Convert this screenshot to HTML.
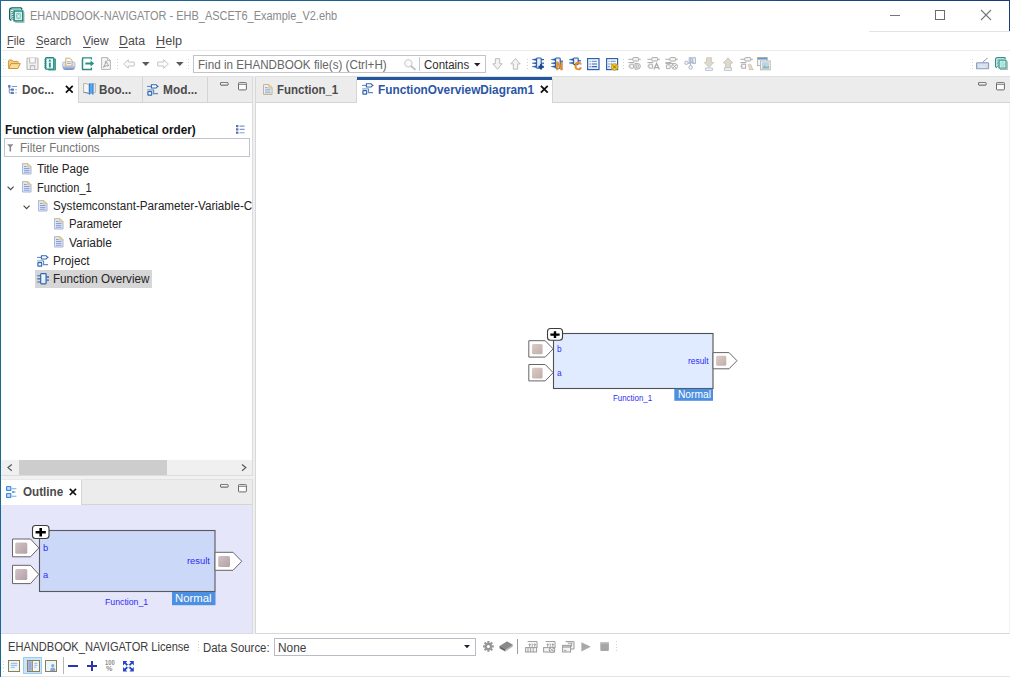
<!DOCTYPE html>
<html><head><meta charset="utf-8"><title>EHANDBOOK-NAVIGATOR</title>
<style>
html,body{margin:0;padding:0;}
body{width:1010px;height:677px;position:relative;overflow:hidden;background:#fff;font-family:"Liberation Sans",sans-serif;font-size:12px;color:#222;}
.a{position:absolute;}
.t{position:absolute;white-space:nowrap;transform-origin:0 0;}
.b{font-weight:bold;}
svg{position:absolute;overflow:visible;}
u{text-decoration:underline;text-underline-offset:1.5px;text-decoration-thickness:1px;}
</style></head><body>
<!-- window frame -->
<div class="a" style="left:0px;top:0px;width:1010px;height:1px;background:linear-gradient(90deg,#1b6a98,#1a5c93 45%,#1c3a7d);"></div>
<div class="a" style="left:0px;top:0px;width:1px;height:677px;background:#1a6a8f;"></div>
<div class="a" style="left:1009px;top:0px;width:1px;height:31px;background:#1c3a7d;"></div>
<div class="a" style="left:869px;top:31px;width:141px;height:1px;background:#e3e3e3;"></div>
<div class="a" style="left:1px;top:676px;width:1009px;height:1px;background:#e4e4e4;"></div>
<!-- title bar -->
<svg style="left:9px;top:6.5px;" width="17" height="17" viewBox="0 0 17 17">
<path d="M6.2 15.4 H15 V5.2" fill="none" stroke="#b9b9b9" stroke-width="1.1"/>
<path d="M12.7 2.8 V1.8 Q12.7 0.9 11.8 0.9 H3.2 Q0.7 0.9 0.7 3.4 V11.4 Q0.7 13 2.4 13.2" fill="none" stroke="#0e625c" stroke-width="1.4"/>
<path d="M2 2.6 H11.6" stroke="#7cc4ba" stroke-width="1"/>
<rect x="5.1" y="4" width="8.7" height="9.9" fill="#d9f0ed" stroke="#138278" stroke-width="1.4"/>
<rect x="7" y="5.9" width="5" height="6.1" fill="#7fc8be"/>
<path d="M7.4 11.6 L11.8 6.4 M7.6 6.6 L9.4 8.8 M10.4 9.8 L11.8 11.6" stroke="#e6f6f3" stroke-width="0.9"/>
<circle cx="9.7" cy="9.2" r="1" fill="#e6f6f3"/>
<path d="M2.2 4.4 L4.8 5.2 M2.2 6.2 L4.8 7 M2.2 8 L4.8 8.8 M2.2 9.8 L4.8 10.6 M2.2 11.6 L4.8 12.4" stroke="#16796f" stroke-width="0.9"/></svg>
<div class="t" style="left:30.4px;top:9.13px;font-size:12px;line-height:14px;height:14px;transform:scaleX(0.9139);color:#8a8a8a;">EHANDBOOK-NAVIGATOR - EHB_ASCET6_Example_V2.ehb</div>
<div class="a" style="left:890px;top:15px;width:10px;height:1px;background:#777;"></div>
<div class="a" style="left:935px;top:10px;width:10px;height:10px;background:transparent;border:1px solid #6b6b6b;box-sizing:border-box;"></div>
<svg style="left:981px;top:10px;" width="10" height="10" viewBox="0 0 10 10"><path d="M0 0 L10 10 M10 0 L0 10" stroke="#777" stroke-width="1.1" fill="none"/></svg>
<!-- menu -->
<div class="t" style="left:7.0px;top:34.03px;font-size:12px;line-height:14px;height:14px;transform:scaleX(0.9309);color:#4c4c4c;"><u>F</u>ile</div>
<div class="t" style="left:36.0px;top:34.03px;font-size:12px;line-height:14px;height:14px;transform:scaleX(0.9284);color:#4c4c4c;"><u>S</u>earch</div>
<div class="t" style="left:82.5px;top:34.03px;font-size:12px;line-height:14px;height:14px;transform:scaleX(0.9886);color:#4c4c4c;"><u>V</u>iew</div>
<div class="t" style="left:119.0px;top:34.03px;font-size:12px;line-height:14px;height:14px;transform:scaleX(1.0257);color:#4c4c4c;"><u>D</u>ata</div>
<div class="t" style="left:156.0px;top:34.03px;font-size:12px;line-height:14px;height:14px;transform:scaleX(1.0535);color:#4c4c4c;"><u>H</u>elp</div>
<div class="a" style="left:2px;top:50px;width:1008px;height:1px;background:#ebebeb;"></div>
<!-- toolbar -->
<div class="a" style="left:3px;top:59px;width:1px;height:1px;background:#d2d2d2;"></div>
<div class="a" style="left:3px;top:62px;width:1px;height:1px;background:#d2d2d2;"></div>
<div class="a" style="left:3px;top:65px;width:1px;height:1px;background:#d2d2d2;"></div>
<div class="a" style="left:3px;top:68px;width:1px;height:1px;background:#d2d2d2;"></div>
<svg style="left:8px;top:59px;" width="13" height="11" viewBox="0 0 13 11">
<path d="M0.6 9.4 V2 Q0.6 1 1.6 1 H4 L5.2 2.4 H9.4 Q10.2 2.4 10.2 3.2 V4.5" fill="#f3cf84" stroke="#d09a40" stroke-width="1"/>
<path d="M0.7 9.5 L2.9 4.6 H12.3 L9.9 9.5 Z" fill="#f8dc97" stroke="#cf9436" stroke-width="1" stroke-linejoin="round"/></svg>
<svg style="left:26px;top:57px;" width="13" height="13" viewBox="0 0 13 13">
<rect x="1" y="1" width="11" height="11.5" rx="1" fill="#f1f1f1" stroke="#bdbdbd" stroke-width="1.2"/>
<path d="M3.6 1.2 V5.4 Q3.6 6 4.2 6 H8.8 Q9.4 6 9.4 5.4 V1.2" fill="#fafafa" stroke="#bdbdbd" stroke-width="1.1"/>
<path d="M4.4 12.4 V8.6 H8.6 V12.4" fill="none" stroke="#bdbdbd" stroke-width="1.1"/>
</svg>
<svg style="left:44px;top:57px;" width="13" height="14" viewBox="0 0 13 14">
<path d="M3 2 H11.4 V13 H4.4 V12" fill="#8fcdc5" stroke="#2c968c" stroke-width="1"/>
<rect x="1.6" y="0.7" width="8.2" height="11.4" rx="0.8" fill="#f2faf9" stroke="#1d8a80" stroke-width="1.4"/>
<path d="M0.2 2.8 h2.2 M0.2 4.8 h2.2 M0.2 6.8 h2.2 M0.2 8.8 h2.2 M0.2 10.6 h2.2" stroke="#1d8a80" stroke-width="0.9"/>
<path d="M5.8 2 L7.2 4.4 H4.4 Z" fill="#1d8a80"/>
<rect x="4.9" y="5.6" width="1.9" height="4.9" fill="#2c968c"/></svg>
<svg style="left:62px;top:57px;" width="14" height="14" viewBox="0 0 14 14">
<defs><linearGradient id="tr" x1="0" y1="0" x2="0" y2="1"><stop offset="0" stop-color="#c9d5ee"/><stop offset="1" stop-color="#6f8ac8"/></linearGradient></defs>
<path d="M0.6 6.4 Q0.6 5 2 5 H11.6 Q13 5 13 6.4 V10 H0.6 Z" fill="#dbe3f4" stroke="#9fb2dc" stroke-width="0.8"/>
<path d="M3.8 9 V1.2 H7.8 L10 3.2 V9 Z" fill="#fbfaf3" stroke="#c9a64e" stroke-width="0.9"/>
<path d="M5 4.8 H8.8 M5 6.6 H8.8" stroke="#8aa0d0" stroke-width="0.9"/>
<path d="M0.6 8.4 H2.4 Q2.6 9.6 3.8 9.6 H9.8 Q11 9.6 11.2 8.4 H13 V10 Q13 13 10 13 H3.6 Q0.6 13 0.6 10 Z" fill="url(#tr)"/></svg>
<svg style="left:81px;top:57px;" width="14" height="14" viewBox="0 0 14 14">
<path d="M10.4 2.6 V0.9 H1.6 V12.5 H10.4 V10.6" fill="none" stroke="#2c8f86" stroke-width="1.3"/>
<path d="M0.4 3 h1.6 M0.4 5 h1.6 M0.4 7 h1.6 M0.4 9 h1.6 M0.4 11 h1.6" stroke="#2c8f86" stroke-width="0.8"/>
<path d="M4.4 5.4 H9.6 V3.4 L13.2 6.5 L9.6 9.6 V7.6 H4.4 Z" fill="#2c8f86"/></svg>
<svg style="left:101px;top:57px;" width="10" height="13" viewBox="0 0 10 13">
<path d="M0.6 0.6 H6.4 L9.4 3.6 V12.4 H0.6 Z" fill="#f6f6f6" stroke="#b5b5b5" stroke-width="1"/>
<path d="M6.4 0.6 V3.6 H9.4" fill="none" stroke="#b5b5b5" stroke-width="0.9"/>
<path d="M2.4 10.2 Q4.6 7.6 4.6 4.6 Q4.6 3.2 5.2 4.4 Q6 7.4 8 8.6 Q5 8.2 2.4 10.2 Z" fill="none" stroke="#9a9a9a" stroke-width="0.9"/>
</svg>
<div class="a" style="left:117px;top:59px;width:1px;height:1px;background:#d2d2d2;"></div>
<div class="a" style="left:117px;top:62px;width:1px;height:1px;background:#d2d2d2;"></div>
<div class="a" style="left:117px;top:65px;width:1px;height:1px;background:#d2d2d2;"></div>
<div class="a" style="left:117px;top:68px;width:1px;height:1px;background:#d2d2d2;"></div>
<svg style="left:123px;top:59px;" width="12" height="10" viewBox="0 0 12 10"><path d="M0.7 5 L5.3 0.7 V3 H11.3 V7 H5.3 V9.3 Z" fill="#fbfbfb" stroke="#c6c6c6" stroke-width="1" stroke-linejoin="round"/></svg>
<svg style="left:142px;top:62px;" width="8" height="4" viewBox="0 0 8 4"><path d="M0 0 H7.6 L3.8 4 Z" fill="#5a5a5a"/></svg>
<svg style="left:157px;top:59px;" width="12" height="10" viewBox="0 0 12 10"><path d="M11.3 5 L6.7 0.7 V3 H0.7 V7 H6.7 V9.3 Z" fill="#fbfbfb" stroke="#c6c6c6" stroke-width="1" stroke-linejoin="round"/></svg>
<svg style="left:175.5px;top:62px;" width="8" height="4" viewBox="0 0 8 4"><path d="M0 0 H7.6 L3.8 4 Z" fill="#5a5a5a"/></svg>
<div class="a" style="left:188px;top:59px;width:1px;height:1px;background:#d2d2d2;"></div>
<div class="a" style="left:188px;top:62px;width:1px;height:1px;background:#d2d2d2;"></div>
<div class="a" style="left:188px;top:65px;width:1px;height:1px;background:#d2d2d2;"></div>
<div class="a" style="left:188px;top:68px;width:1px;height:1px;background:#d2d2d2;"></div>
<div class="a" style="left:193px;top:55px;width:293px;height:18px;background:#fff;border:1px solid #c0c3ca;box-sizing:border-box;"></div>
<div class="t" style="left:198.3px;top:58.03px;font-size:12px;line-height:14px;height:14px;transform:scaleX(0.9708);color:#666;">Find in EHANDBOOK file(s) (Ctrl+H)</div>
<svg style="left:404px;top:59px;" width="12" height="11" viewBox="0 0 12 11"><circle cx="4.4" cy="4.4" r="3.6" fill="#fafafa" stroke="#c9c9c9" stroke-width="1.1"/><path d="M7.2 7.2 L11 10.4" stroke="#bdbdbd" stroke-width="1.8" stroke-linecap="round"/></svg>
<div class="a" style="left:419px;top:57px;width:1px;height:14px;background:#c8c8c8;"></div>
<div class="t" style="left:424.2px;top:58.03px;font-size:12px;line-height:14px;height:14px;transform:scaleX(0.9543);color:#2e2e2e;">Contains</div>
<svg style="left:473.6px;top:63px;" width="7" height="4" viewBox="0 0 7 4"><path d="M0 0 H6.4 L3.2 3.4 Z" fill="#222"/></svg>
<svg style="left:492px;top:58px;" width="11" height="12" viewBox="0 0 11 12"><path d="M3.3 0.7 H7.7 V5.8 H10.2 L5.5 11.2 L0.8 5.8 H3.3 Z" fill="#f3f3f3" stroke="#bcbcbc" stroke-width="1" stroke-linejoin="round"/></svg>
<svg style="left:510px;top:58px;" width="11" height="12" viewBox="0 0 11 12"><path d="M3.3 11.2 H7.7 V5.9 H10.2 L5.5 0.6 L0.8 5.9 H3.3 Z" fill="#f3f3f3" stroke="#bcbcbc" stroke-width="1" stroke-linejoin="round"/></svg>
<div class="a" style="left:526.5px;top:59px;width:1px;height:1px;background:#d2d2d2;"></div>
<div class="a" style="left:526.5px;top:62px;width:1px;height:1px;background:#d2d2d2;"></div>
<div class="a" style="left:526.5px;top:65px;width:1px;height:1px;background:#d2d2d2;"></div>
<div class="a" style="left:526.5px;top:68px;width:1px;height:1px;background:#d2d2d2;"></div>
<svg style="left:532px;top:57.3px;" width="14" height="14" viewBox="0 0 14 14"><rect x="4.6" y="1" width="4.6" height="10.2" rx="0.8" fill="#eaf0fa" stroke="#2a5ba8" stroke-width="1.1"/><path d="M0.2 2.6 L4 1.8 V3.4000000000000004 Z" fill="#2a5ba8" stroke="#2a5ba8" stroke-width="0.5"/><path d="M0.2 6.2 L4 5.4 V7.0 Z" fill="#2a5ba8" stroke="#2a5ba8" stroke-width="0.5"/><path d="M0.2 9.6 L4 8.799999999999999 V10.4 Z" fill="#2a5ba8" stroke="#2a5ba8" stroke-width="0.5"/><path d="M9 2.6 h3" stroke="#2a5ba8" stroke-width="1.2"/><path d="M9 6.2 h3" stroke="#2a5ba8" stroke-width="1.2"/><path d="M6.4 9.8 h5.4 M9.1 7.1 v5.4" stroke="#1a4a9a" stroke-width="2.2"/><rect x="7.6" y="8.3" width="3" height="3" fill="#1a4a9a" transform="rotate(45 9.1 9.8)"/></svg>
<svg style="left:550.6px;top:57.3px;" width="14" height="14" viewBox="0 0 14 14"><rect x="4.6" y="1" width="4.6" height="10.2" rx="0.8" fill="#eaf0fa" stroke="#2a5ba8" stroke-width="1.1"/><path d="M0.2 2.6 L4 1.8 V3.4000000000000004 Z" fill="#2a5ba8" stroke="#2a5ba8" stroke-width="0.5"/><path d="M0.2 6.2 L4 5.4 V7.0 Z" fill="#2a5ba8" stroke="#2a5ba8" stroke-width="0.5"/><path d="M0.2 9.6 L4 8.799999999999999 V10.4 Z" fill="#2a5ba8" stroke="#2a5ba8" stroke-width="0.5"/><path d="M9 4.2 h3" stroke="#2a5ba8" stroke-width="1.2"/><text x="5" y="13" font-family="Liberation Sans, sans-serif" font-weight="bold" font-size="10" fill="#e8942c" stroke="#d9831f" stroke-width="0.5">N</text></svg>
<svg style="left:569px;top:57.3px;" width="14" height="14" viewBox="0 0 14 14"><rect x="4.6" y="1" width="4.6" height="6.6" rx="0.8" fill="#eaf0fa" stroke="#2a5ba8" stroke-width="1.1"/><path d="M0.2 2.6 L4 1.8 V3.4000000000000004 Z" fill="#2a5ba8" stroke="#2a5ba8" stroke-width="0.5"/><path d="M0.2 6 L4 5.2 V6.8 Z" fill="#2a5ba8" stroke="#2a5ba8" stroke-width="0.5"/><path d="M9 3.8 h3" stroke="#2a5ba8" stroke-width="1.2"/><text x="5.6" y="13" font-family="Liberation Sans, sans-serif" font-weight="bold" font-size="10" fill="#e8942c" stroke="#d9831f" stroke-width="0.5">C</text></svg>
<svg style="left:587.4px;top:58px;" width="13" height="12" viewBox="0 0 13 12">
<defs><linearGradient id="lg1" x1="0" y1="0" x2="0" y2="1"><stop offset="0" stop-color="#fff"/><stop offset="1" stop-color="#dde8f8"/></linearGradient></defs>
<rect x="0.6" y="0.6" width="11.4" height="11" fill="url(#lg1)" stroke="#2f63b0" stroke-width="1.2"/>
<path d="M2.6 3.3 h1.1 M4.8 3.3 h5.2" stroke="#7f9fd4" stroke-width="1.3"/>
<path d="M2.6 6 h1.1 M4.8 6 h5.2 M2.6 8.6 h1.1 M4.8 8.6 h5.2" stroke="#3a6cb8" stroke-width="1.1"/></svg>
<svg style="left:606px;top:58px;" width="14" height="13" viewBox="0 0 14 13">
<rect x="0.6" y="0.6" width="11" height="11" fill="url(#lg1)" stroke="#2f63b0" stroke-width="1.2"/>
<path d="M2.4 3.3 h1.1 M4.6 3.3 h5" stroke="#7f9fd4" stroke-width="1.3"/>
<path d="M2.4 6 h1.1 M4.6 6 h1.6 M2.4 8.6 h1.1" stroke="#3a6cb8" stroke-width="1.1"/>
<circle cx="8.5" cy="8.9" r="3.3" fill="#f0c62c" stroke="#c29a1c" stroke-width="0.8"/>
<path d="M7 7.4 l3 3 M10 7.4 l-3 3" stroke="#8a6a10" stroke-width="0.9"/></svg>
<div class="a" style="left:623px;top:59px;width:1px;height:1px;background:#d2d2d2;"></div>
<div class="a" style="left:623px;top:62px;width:1px;height:1px;background:#d2d2d2;"></div>
<div class="a" style="left:623px;top:65px;width:1px;height:1px;background:#d2d2d2;"></div>
<div class="a" style="left:623px;top:68px;width:1px;height:1px;background:#d2d2d2;"></div>
<svg style="left:628px;top:57px;" width="14" height="14" viewBox="0 0 14 14"><path d="M0.4 2.3 h4.4 M10.6 2.3 h2.2" stroke="#acacac" stroke-width="1"/><rect x="4.8" y="0.6" width="5.8" height="3.4" rx="0.6" fill="#f6f6f6" stroke="#acacac" stroke-width="1"/><path d="M0.4 5.6 h6" stroke="#acacac" stroke-width="1"/><path d="M0.4 9.2 h1.4" stroke="#acacac" stroke-width="1"/><rect x="1.8" y="7.2" width="3.8" height="4" rx="0.6" fill="#f6f6f6" stroke="#acacac" stroke-width="1"/><path d="M7 6.4 h2.2 q3.2 0 3.2 2.9 q0 2.9 -3.2 2.9 h-2.2 z" fill="#f6f6f6" stroke="#acacac" stroke-width="1"/><path d="M8.6 7.6 v3.4 q2.2 0 2.2 -1.7 q0 -1.7 -2.2 -1.7z" fill="none" stroke="#acacac" stroke-width="0.8"/></svg>
<svg style="left:646.6px;top:57px;" width="14" height="14" viewBox="0 0 14 14"><path d="M0.4 2.3 h4.4 M10.6 2.3 h2.2" stroke="#acacac" stroke-width="1"/><rect x="4.8" y="0.6" width="5.8" height="3.4" rx="0.6" fill="#f6f6f6" stroke="#acacac" stroke-width="1"/><path d="M0.4 5.6 h6" stroke="#acacac" stroke-width="1"/><path d="M0.4 9.2 h1.4" stroke="#acacac" stroke-width="1"/><rect x="1.8" y="7.2" width="3.8" height="4" rx="0.6" fill="#f6f6f6" stroke="#acacac" stroke-width="1"/><path d="M6.8 12.4 L9.6 6.4 L12.4 12.4 M7.8 10.6 h3.6" fill="none" stroke="#acacac" stroke-width="1.3"/></svg>
<svg style="left:665px;top:57px;" width="14" height="14" viewBox="0 0 14 14"><path d="M0.4 2.3 h4.4 M10.6 2.3 h2.2" stroke="#acacac" stroke-width="1"/><rect x="4.8" y="0.6" width="5.8" height="3.4" rx="0.6" fill="#f6f6f6" stroke="#acacac" stroke-width="1"/><path d="M0.4 5.6 h6" stroke="#acacac" stroke-width="1"/><path d="M0.4 6.6 h9" stroke="#acacac" stroke-width="1"/><rect x="1.4" y="7.8" width="3.8" height="3.8" rx="0.6" fill="#f6f6f6" stroke="#acacac" stroke-width="1"/><circle cx="9.6" cy="9.4" r="2.9" fill="#f6f6f6" stroke="#acacac" stroke-width="1"/><path d="M7.8 7.6 l3.6 3.6 M11.4 7.6 l-3.6 3.6" stroke="#acacac" stroke-width="0.9"/></svg>
<svg style="left:684px;top:57px;" width="14" height="14" viewBox="0 0 14 14"><rect x="5.2" y="0.8" width="2.8" height="4.8" fill="#f4f6fa" stroke="#aab6ca" stroke-width="1"/><rect x="8.8" y="0.8" width="2.6" height="5.6" fill="#f4f6fa" stroke="#aab6ca" stroke-width="1"/><path d="M6.6 0.8 L6.6 9 M10 5 L3.4 6.6" stroke="#aab6ca" stroke-width="1"/><circle cx="2.4" cy="5.8" r="1.7" fill="#f4f6fa" stroke="#aab6ca" stroke-width="1"/><circle cx="6.6" cy="10.4" r="1.8" fill="#f4f6fa" stroke="#aab6ca" stroke-width="1"/></svg>
<svg style="left:703px;top:57px;" width="12" height="14" viewBox="0 0 12 14"><path d="M2.4 11 h7 v2.4 h-7 z" fill="#f7f9fc" stroke="#b7c3d6" stroke-width="1"/><path d="M3.6 0.8 H8.4 V5.4 H10.8 L6 10.4 L1.2 5.4 H3.6 Z" fill="#ddd9cc" stroke="#c9c5b6" stroke-width="0.9" stroke-linejoin="round"/></svg>
<svg style="left:722px;top:57px;" width="12" height="14" viewBox="0 0 12 14"><path d="M2.4 10.6 h7 v2.8 h-7 z" fill="#f7f9fc" stroke="#b7c3d6" stroke-width="1"/><path d="M3.6 10.8 H8.4 V6 H10.8 L6 0.8 L1.2 6 H3.6 Z" fill="#ddd9cc" stroke="#c9c5b6" stroke-width="0.9" stroke-linejoin="round"/></svg>
<svg style="left:740px;top:57px;" width="14" height="14" viewBox="0 0 14 14"><path d="M0.4 2.3 h4.4 M10.6 2.3 h2.2" stroke="#acacac" stroke-width="1"/><rect x="4.8" y="0.6" width="5.8" height="3.4" rx="0.6" fill="#f6f6f6" stroke="#acacac" stroke-width="1"/><path d="M0.4 5.6 h6" stroke="#acacac" stroke-width="1"/><path d="M0.4 9.2 h1.4" stroke="#acacac" stroke-width="1"/><rect x="1.8" y="7.2" width="3.8" height="4" fill="#fbfbfb" stroke="#acacac" stroke-width="1"/><path d="M8 8 q3 -2 3.4 1 q0.4 2.6 2 3.6 h-4.4 q1.4 -1.6 -1 -4.6 z" fill="#e6dfd0" stroke="#c9c2b0" stroke-width="0.9"/></svg>
<svg style="left:757px;top:57px;" width="14" height="14" viewBox="0 0 14 14">
<rect x="0.6" y="0.6" width="9.6" height="8" fill="#f4f8fd" stroke="#c4b48c" stroke-width="1"/>
<rect x="0.6" y="0.6" width="9.6" height="2" fill="#6a9ad6"/>
<rect x="3.6" y="4" width="9.6" height="8.8" fill="#fff" stroke="#b5b5b5" stroke-width="1"/>
<rect x="4.8" y="5.2" width="7.2" height="6.4" fill="#b9d3ea"/>
<path d="M4.8 11.6 L7.6 8.6 L9.6 10.2 L12 9 V11.6 Z" fill="#8fb59a"/></svg>
<div class="a" style="left:972px;top:59px;width:1px;height:1px;background:#d2d2d2;"></div>
<div class="a" style="left:972px;top:62px;width:1px;height:1px;background:#d2d2d2;"></div>
<div class="a" style="left:972px;top:65px;width:1px;height:1px;background:#d2d2d2;"></div>
<div class="a" style="left:972px;top:68px;width:1px;height:1px;background:#d2d2d2;"></div>
<svg style="left:976.4px;top:56.6px;" width="14" height="13" viewBox="0 0 14 13">
<path d="M7 5.8 Q7.4 3.8 9.2 3 Q10.8 2.2 11.4 0.8" fill="none" stroke="#8d9bb4" stroke-width="1"/>
<rect x="0.6" y="5.8" width="12" height="6" rx="0.4" fill="#cfd9ea" stroke="#8d9dbc" stroke-width="1.1"/>
<path d="M2.2 7.9 h8.8" stroke="#eef2f9" stroke-width="1" stroke-dasharray="1.3 0.7"/><path d="M2.2 10 h8.8" stroke="#eef2f9" stroke-width="1" stroke-dasharray="1 0.6 5 0.6 1 0.6"/></svg>
<svg style="left:994.8px;top:56.8px;" width="14" height="14" viewBox="0 0 14 14">
<g transform="scale(0.8)">
<path d="M6.2 15.6 H15.4 V5.2" fill="none" stroke="#b0b0b0" stroke-width="1.3"/>
<path d="M12.7 2.8 V1.8 Q12.7 0.9 11.8 0.9 H3.2 Q0.7 0.9 0.7 3.4 V11.4 Q0.7 13 2.4 13.2" fill="none" stroke="#2f9086" stroke-width="1.5"/>
<path d="M2 2.8 H11.6" stroke="#8fd0c6" stroke-width="1.2"/>
<rect x="5.1" y="4" width="8.7" height="9.9" fill="#dff3f0" stroke="#2fa094" stroke-width="1.5"/>
<rect x="7" y="5.9" width="5" height="6.1" fill="#8fd0c6"/>
<path d="M7.4 11.6 L11.8 6.4 M7.6 6.6 L9.4 8.8 M10.4 9.8 L11.8 11.6" stroke="#eefaf8" stroke-width="1"/>
<path d="M2.2 4.4 L4.8 5.2 M2.2 6.2 L4.8 7 M2.2 8 L4.8 8.8 M2.2 9.8 L4.8 10.6 M2.2 11.6 L4.8 12.4" stroke="#3aa397" stroke-width="1"/>
</g></svg>
<!-- left panel: tab strip -->
<div class="a" style="left:1px;top:76px;width:252px;height:27px;background:#ececec;"></div>
<div class="a" style="left:1px;top:76px;width:252px;height:1px;background:#e2e2e2;"></div>
<div class="a" style="left:1px;top:102px;width:252px;height:1px;background:#d4d4d4;"></div>
<div class="a" style="left:252px;top:76px;width:1px;height:399px;background:#dcdcdc;"></div>
<div class="a" style="left:1px;top:76px;width:78px;height:27px;background:#fff;"></div>
<div class="a" style="left:1px;top:76px;width:78px;height:1px;background:#e9e9e9;"></div>
<div class="a" style="left:78px;top:77px;width:1px;height:26px;background:#d4d4d4;"></div>
<div class="a" style="left:142px;top:77px;width:1px;height:25px;background:#d4d4d4;"></div>
<div class="a" style="left:207px;top:77px;width:1px;height:25px;background:#d4d4d4;"></div>
<svg style="left:8px;top:85px;" width="10" height="9" viewBox="0 0 10 9">
<rect x="0.1" y="0.1" width="2.5" height="2.6" rx="0.6" fill="#5b7db9"/>
<path d="M1.3 2.6 V8 H3" stroke="#6a89c0" stroke-width="0.9" fill="none"/>
<path d="M1.3 4.8 H3" stroke="#6a89c0" stroke-width="0.9"/>
<rect x="2.8" y="3.6" width="3.2" height="2.2" rx="0.6" fill="#5b7db9"/>
<rect x="2.8" y="6.8" width="3.2" height="2.2" rx="0.6" fill="#5b7db9"/>
<path d="M3.8 1.5 H9" stroke="#7e9aca" stroke-width="1.1"/>
<path d="M7 4.7 H9" stroke="#9fb4d8" stroke-width="1.1"/>
<path d="M7 7.9 H9" stroke="#b4c5e2" stroke-width="1.3"/></svg>
<div class="t b" style="left:22.2px;top:82.53px;font-size:12px;line-height:14px;height:14px;transform:scaleX(0.9794);color:#4a4a4a;">Doc...</div>
<svg style="left:65.3px;top:85px;" width="9" height="9" viewBox="0 0 9 9"><path d="M0.9 0.9 L7.7 7.7 M7.7 0.9 L0.9 7.7" stroke="#111" stroke-width="1.8" fill="none"/></svg>
<svg style="left:83px;top:83px;" width="13" height="12" viewBox="0 0 13 12">
<defs><linearGradient id="rb" x1="0" y1="0" x2="1" y2="0"><stop offset="0" stop-color="#1c74d6"/><stop offset="0.5" stop-color="#6cb6ff"/><stop offset="1" stop-color="#1c74d6"/></linearGradient></defs>
<path d="M0.6 0.6 Q3.4 0.2 6 1.6 V10.6 Q3.4 9.4 0.6 9.4 Z" fill="#f1f6fc" stroke="#b9ab84" stroke-width="0.9"/>
<path d="M0.6 9.4 Q3.4 9.4 6 10.6" fill="none" stroke="#7d89a6" stroke-width="1"/>
<path d="M10.2 1 Q11.4 0.5 12.3 0.6 V9.6 Q11.4 9.6 10.2 10.2 Z" fill="#f1f6fc" stroke="#a9a58c" stroke-width="0.8"/>
<path d="M6 0.2 H10.3 V11.9 L8.15 10.4 L6 11.9 Z" fill="url(#rb)"/></svg>
<div class="t b" style="left:99.2px;top:82.53px;font-size:12px;line-height:14px;height:14px;transform:scaleX(0.9692);color:#4a4a4a;">Boo...</div>
<svg style="left:147px;top:83.6px;" width="12" height="12" viewBox="0 0 12 12">
<path d="M0 2.4 H4.4 M10 2.4 H11.6" stroke="#2f67b2" stroke-width="1" fill="none" opacity="0.8"/>
<path d="M4.4 0.8 H9.2 L10.6 2.4 L9.2 4 H4.4 Z" fill="#fff" stroke="#2f67b2" stroke-width="1.1" stroke-linejoin="round"/>
<path d="M0.2 5.9 H7" stroke="#2f67b2" stroke-width="1.2" opacity="0.6"/>
<path d="M6.6 5.9 V9.6 H11" stroke="#2f67b2" stroke-width="1.1" fill="none" opacity="0.75"/>
<rect x="0.9" y="7.7" width="3.8" height="3.4" rx="0.4" fill="#fff" stroke="#2f67b2" stroke-width="1.2"/></svg>
<div class="t b" style="left:163.2px;top:82.53px;font-size:12px;line-height:14px;height:14px;transform:scaleX(0.9897);color:#4a4a4a;">Mod...</div>
<svg style="left:220px;top:82px;" width="9" height="4" viewBox="0 0 9 4"><rect x="0.5" y="0.5" width="7.6" height="2.7" rx="0.5" fill="#dcdcdc" stroke="#666" stroke-width="1"/><path d="M1.2 1.3 H7.4" stroke="#fff" stroke-width="0.8"/></svg>
<svg style="left:238.4px;top:82.3px;" width="10" height="9" viewBox="0 0 10 9"><rect x="0.5" y="0.5" width="7.9" height="7.4" rx="0.8" fill="#fdfdfd" stroke="#6a6a6a" stroke-width="1"/><path d="M0.8 2.4 H8.2" stroke="#7a7a7a" stroke-width="0.9"/><path d="M1 1.3 H8" stroke="#d0d0d0" stroke-width="0.9"/></svg>
<!-- left panel: function view -->
<div class="t b" style="left:4.8px;top:122.83px;font-size:12px;line-height:14px;height:14px;transform:scaleX(0.9795);color:#111;">Function view (alphabetical order)</div>
<svg style="left:236px;top:125px;" width="9" height="9" viewBox="0 0 9 9">
<rect x="0" y="0" width="2.4" height="2.2" fill="#5573b5"/><rect x="0" y="3.3" width="2.4" height="2.2" fill="#5573b5"/><rect x="0" y="6.6" width="2.4" height="2.2" fill="#5573b5"/>
<path d="M3.6 1.1 H8.6 M3.6 4.4 H8.6" stroke="#7f98cc" stroke-width="1.1"/><path d="M3.6 7.7 H8.6" stroke="#a9bbdf" stroke-width="1.4"/></svg>
<div class="a" style="left:4px;top:138px;width:246px;height:19px;background:#fff;border:1px solid #c0c4cc;box-sizing:border-box;"></div>
<svg style="left:6.5px;top:144px;" width="7" height="8" viewBox="0 0 7 8"><path d="M0.2 0.2 H6.4 L4.1 3 V7.4 H2.5 V3 Z" fill="#8a8a8a"/></svg>
<div class="t" style="left:19.8px;top:141.43px;font-size:12px;line-height:14px;height:14px;transform:scaleX(0.9716);color:#767676;">Filter Functions</div>
<svg style="left:22px;top:163px;" width="10" height="12" viewBox="0 0 10 12">
<path d="M0.6 0.6 H6 L9 3.6 V11 H0.6 Z" fill="#e6edfa" stroke="#9daccf" stroke-width="0.9"/>
<path d="M5.6 0.6 L9 4 H5.6 Z" fill="#f1d89a" stroke="#d3b870" stroke-width="0.6"/>
<path d="M0.6 0.6 H5.6" stroke="#d9c07c" stroke-width="0.9"/>
<path d="M2 3.4 H4.6 M2 5.4 H7.6 M2 7.3 H7.6 M2 9.2 H7.6" stroke="#7f98d0" stroke-width="1"/></svg>
<div class="t" style="left:37.3px;top:162.23px;font-size:12px;line-height:14px;height:14px;transform:scaleX(0.9704);color:#242424;">Title Page</div>
<svg style="left:6.8px;top:186px;" width="8" height="5" viewBox="0 0 8 5"><path d="M0.6 0.6 L3.6 3.6 L6.6 0.6" fill="none" stroke="#4a4a4a" stroke-width="1.2"/></svg>
<svg style="left:22px;top:181.3px;" width="10" height="12" viewBox="0 0 10 12">
<path d="M0.6 0.6 H6 L9 3.6 V11 H0.6 Z" fill="#e6edfa" stroke="#9daccf" stroke-width="0.9"/>
<path d="M5.6 0.6 L9 4 H5.6 Z" fill="#f1d89a" stroke="#d3b870" stroke-width="0.6"/>
<path d="M0.6 0.6 H5.6" stroke="#d9c07c" stroke-width="0.9"/>
<path d="M2 3.4 H4.6 M2 5.4 H7.6 M2 7.3 H7.6 M2 9.2 H7.6" stroke="#7f98d0" stroke-width="1"/></svg>
<div class="t" style="left:37.3px;top:180.93px;font-size:12px;line-height:14px;height:14px;transform:scaleX(0.9213);color:#242424;">Function_1</div>
<svg style="left:23px;top:204.5px;" width="8" height="5" viewBox="0 0 8 5"><path d="M0.6 0.6 L3.6 3.6 L6.6 0.6" fill="none" stroke="#4a4a4a" stroke-width="1.2"/></svg>
<svg style="left:38.4px;top:199.6px;" width="10" height="12" viewBox="0 0 10 12">
<path d="M0.6 0.6 H6 L9 3.6 V11 H0.6 Z" fill="#e6edfa" stroke="#9daccf" stroke-width="0.9"/>
<path d="M5.6 0.6 L9 4 H5.6 Z" fill="#f1d89a" stroke="#d3b870" stroke-width="0.6"/>
<path d="M0.6 0.6 H5.6" stroke="#d9c07c" stroke-width="0.9"/>
<path d="M2 3.4 H4.6 M2 5.4 H7.6 M2 7.3 H7.6 M2 9.2 H7.6" stroke="#7f98d0" stroke-width="1"/></svg>
<div class="a" style="left:53px;top:198px;width:199px;height:18px;overflow:hidden;">
<div class="t" style="left:0.3px;top:1.03px;font-size:12px;line-height:14px;height:14px;transform:scaleX(0.9708);color:#242424;">Systemconstant-Parameter-Variable-C</div>
</div>
<svg style="left:54.2px;top:218px;" width="10" height="12" viewBox="0 0 10 12">
<path d="M0.6 0.6 H6 L9 3.6 V11 H0.6 Z" fill="#e6edfa" stroke="#9daccf" stroke-width="0.9"/>
<path d="M5.6 0.6 L9 4 H5.6 Z" fill="#f1d89a" stroke="#d3b870" stroke-width="0.6"/>
<path d="M0.6 0.6 H5.6" stroke="#d9c07c" stroke-width="0.9"/>
<path d="M2 3.4 H4.6 M2 5.4 H7.6 M2 7.3 H7.6 M2 9.2 H7.6" stroke="#7f98d0" stroke-width="1"/></svg>
<div class="t" style="left:69.2px;top:217.23px;font-size:12px;line-height:14px;height:14px;transform:scaleX(0.9460);color:#242424;">Parameter</div>
<svg style="left:54.2px;top:236.3px;" width="10" height="12" viewBox="0 0 10 12">
<path d="M0.6 0.6 H6 L9 3.6 V11 H0.6 Z" fill="#e6edfa" stroke="#9daccf" stroke-width="0.9"/>
<path d="M5.6 0.6 L9 4 H5.6 Z" fill="#f1d89a" stroke="#d3b870" stroke-width="0.6"/>
<path d="M0.6 0.6 H5.6" stroke="#d9c07c" stroke-width="0.9"/>
<path d="M2 3.4 H4.6 M2 5.4 H7.6 M2 7.3 H7.6 M2 9.2 H7.6" stroke="#7f98d0" stroke-width="1"/></svg>
<div class="t" style="left:69.2px;top:235.63px;font-size:12px;line-height:14px;height:14px;transform:scaleX(0.9945);color:#242424;">Variable</div>
<svg style="left:36.8px;top:255.0px;" width="12" height="12" viewBox="0 0 12 12">
<path d="M0 2.4 H4.4 M10 2.4 H11.6" stroke="#2f67b2" stroke-width="1" fill="none" opacity="0.8"/>
<path d="M4.4 0.8 H9.2 L10.6 2.4 L9.2 4 H4.4 Z" fill="#fff" stroke="#2f67b2" stroke-width="1.1" stroke-linejoin="round"/>
<path d="M0.2 5.9 H7" stroke="#2f67b2" stroke-width="1.2" opacity="0.6"/>
<path d="M6.6 5.9 V9.6 H11" stroke="#2f67b2" stroke-width="1.1" fill="none" opacity="0.75"/>
<rect x="0.9" y="7.7" width="3.8" height="3.4" rx="0.4" fill="#fff" stroke="#2f67b2" stroke-width="1.2"/></svg>
<div class="t" style="left:53.4px;top:253.73px;font-size:12px;line-height:14px;height:14px;transform:scaleX(0.9799);color:#242424;">Project</div>
<div class="a" style="left:35px;top:270px;width:116.5px;height:18.4px;background:#d6d6d6;"></div>
<svg style="left:36.8px;top:273px;" width="13" height="12" viewBox="0 0 13 12">
<defs><linearGradient id="fo" x1="0" y1="0" x2="1" y2="1"><stop offset="0" stop-color="#ffffff"/><stop offset="1" stop-color="#d6e4f6"/></linearGradient></defs>
<rect x="3.7" y="0.6" width="5.4" height="10.2" rx="0.7" fill="url(#fo)" stroke="#2f67b2" stroke-width="1.2"/>
<path d="M0.3 2.7 h3 M0.3 5.9 h3 M0.3 9 h3" stroke="#2f67b2" stroke-width="1.1"/>
<path d="M9.4 4 h2.6 M9.4 7.2 h2.6" stroke="#2f67b2" stroke-width="1.3"/></svg>
<div class="t" style="left:53.4px;top:272.13px;font-size:12px;line-height:14px;height:14px;transform:scaleX(0.9701);color:#242424;">Function Overview</div>
<!-- scrollbar -->
<div class="a" style="left:1px;top:460px;width:251px;height:15px;background:#f0f0f0;"></div>
<div class="a" style="left:19px;top:460px;width:148px;height:15px;background:#cdcdcd;"></div>
<svg style="left:7px;top:464px;" width="6" height="8" viewBox="0 0 6 8"><path d="M4.8 0.5 L1 3.6 L4.8 6.7" fill="none" stroke="#555" stroke-width="1.2"/></svg>
<svg style="left:241px;top:464px;" width="6" height="8" viewBox="0 0 6 8"><path d="M1 0.5 L4.8 3.6 L1 6.7" fill="none" stroke="#555" stroke-width="1.2"/></svg>
<div class="a" style="left:1px;top:475px;width:252px;height:1px;background:#dcdcdc;"></div>
<div class="a" style="left:1px;top:476px;width:252px;height:3px;background:#f1f1f1;"></div>
<div class="a" style="left:253px;top:76px;width:2px;height:558px;background:#efefef;"></div>
<!-- outline panel -->
<div class="a" style="left:1px;top:479px;width:252px;height:26px;background:#ececec;"></div>
<div class="a" style="left:1px;top:479px;width:252px;height:1px;background:#e2e2e2;"></div>
<div class="a" style="left:1px;top:504px;width:252px;height:1px;background:#d4d4d4;"></div>
<div class="a" style="left:252px;top:479px;width:1px;height:155px;background:#dcdcdc;"></div>
<div class="a" style="left:1px;top:479px;width:81px;height:26px;background:#fff;"></div>
<div class="a" style="left:1px;top:479px;width:81px;height:1px;background:#e9e9e9;"></div>
<div class="a" style="left:81px;top:480px;width:1px;height:25px;background:#d4d4d4;"></div>
<svg style="left:6.4px;top:485.8px;" width="11" height="13" viewBox="0 0 11 13">
<defs><linearGradient id="og" x1="0" y1="0" x2="0" y2="1"><stop offset="0" stop-color="#fff"/><stop offset="1" stop-color="#8cc0f2"/></linearGradient></defs>
<rect x="0.6" y="0.6" width="4.2" height="3.9" rx="0.6" fill="url(#og)" stroke="#3f8ad8" stroke-width="1.2"/>
<rect x="0.6" y="7.6" width="4.2" height="3.9" rx="0.6" fill="url(#og)" stroke="#3f8ad8" stroke-width="1.2"/>
<path d="M5.8 2.7 H10.4 M5.8 10.2 H10.4" stroke="#6faae6" stroke-width="1.1"/>
<path d="M6 6 H8.6" stroke="#3f8ad8" stroke-width="1.5"/><path d="M9.2 6 H10" stroke="#8cb8e8" stroke-width="1.2"/></svg>
<div class="t b" style="left:22.8px;top:484.93px;font-size:12px;line-height:14px;height:14px;transform:scaleX(0.9726);color:#4a4a4a;">Outline</div>
<svg style="left:69px;top:488px;" width="8" height="8" viewBox="0 0 8 8"><path d="M0.8 0.8 L7 7 M7 0.8 L0.8 7" stroke="#111" stroke-width="1.7" fill="none"/></svg>
<svg style="left:220px;top:484px;" width="9" height="4" viewBox="0 0 9 4"><rect x="0.5" y="0.5" width="7.6" height="2.7" rx="0.5" fill="#dcdcdc" stroke="#666" stroke-width="1"/><path d="M1.2 1.3 H7.4" stroke="#fff" stroke-width="0.8"/></svg>
<svg style="left:238.4px;top:484.3px;" width="10" height="9" viewBox="0 0 10 9"><rect x="0.5" y="0.5" width="7.9" height="7.4" rx="0.8" fill="#fdfdfd" stroke="#6a6a6a" stroke-width="1"/><path d="M0.8 2.4 H8.2" stroke="#7a7a7a" stroke-width="0.9"/><path d="M1 1.3 H8" stroke="#d0d0d0" stroke-width="0.9"/></svg>
<div class="a" style="left:1px;top:505px;width:251px;height:128px;background:#e6e6fa;"></div>
<div class="a" style="left:1px;top:633px;width:252px;height:1px;background:#dcdcdc;"></div>
<svg style="left:0px;top:0px;pointer-events:none;" width="1010" height="677" viewBox="0 0 1010 677"><defs><linearGradient id="g1" x1="0" y1="0" x2="1" y2="1"><stop offset="0" stop-color="#d2c2c4"/><stop offset="1" stop-color="#b3a2a6"/></linearGradient></defs><rect x="39.5" y="530.5" width="175.5" height="61" fill="#ccd8f8" stroke="#585860" stroke-width="1.1"/><path d="M12.5 539 H30.5 L38.8 547.9 L30.5 556.8 H12.5 Z" fill="#fff" stroke="#666" stroke-width="1"/><rect x="15.2" y="542.6" width="12.1" height="11.1" rx="1.5" fill="url(#g1)"/><path d="M12.5 565.3 H30.5 L38.8 574.45 L30.5 583.6 H12.5 Z" fill="#fff" stroke="#666" stroke-width="1"/><rect x="15.2" y="568.9" width="12.1" height="11.1" rx="1.5" fill="url(#g1)"/><path d="M215 552.3 H233 L241.8 561.3 L233 570.3 H215 Z" fill="#fff" stroke="#666" stroke-width="1"/><rect x="218.2" y="555.9" width="11.8" height="11.1" rx="1.5" fill="url(#g1)"/><rect x="32.5" y="525.5" width="16.5" height="13" rx="3" fill="#fff" stroke="#3c3c3c" stroke-width="1.1"/><path d="M35.6 532.2 H45.8 M40.7 528 V536.4" stroke="#000" stroke-width="2.6"/><rect x="172" y="592" width="43.5" height="13.2" fill="#4d8fe0"/></svg>
<div class="t" style="left:42.8px;top:543.36px;font-size:9.2px;line-height:11.2px;height:11.2px;transform:scaleX(1.0163);color:#2e2cf6;">b</div>
<div class="t" style="left:42.8px;top:569.96px;font-size:9.2px;line-height:11.2px;height:11.2px;transform:scaleX(1.0163);color:#2e2cf6;">a</div>
<div class="t" style="left:187.3px;top:555.86px;font-size:9.2px;line-height:11.2px;height:11.2px;transform:scaleX(1.0179);color:#2e2cf6;">result</div>
<div class="t" style="left:104.6px;top:596.96px;font-size:9.2px;line-height:11.2px;height:11.2px;transform:scaleX(0.9490);color:#2e2cf6;">Function_1</div>
<div class="t" style="left:175.4px;top:592.16px;font-size:11px;line-height:13px;height:13px;transform:scaleX(1.0324);color:#fff;">Normal</div>
<!-- editor -->
<div class="a" style="left:255px;top:76px;width:755px;height:27px;background:#ececec;"></div>
<div class="a" style="left:255px;top:76px;width:755px;height:1px;background:#dfdfdf;"></div>
<div class="a" style="left:255px;top:102px;width:755px;height:1px;background:#d4d4d4;"></div>
<div class="a" style="left:255px;top:77px;width:1px;height:557px;background:#d8d8d8;"></div>
<div class="a" style="left:1009px;top:103px;width:1px;height:531px;background:#f3f3f3;"></div>
<div class="a" style="left:255px;top:633px;width:755px;height:1px;background:#d8d8d8;"></div>
<div class="a" style="left:357px;top:77px;width:195px;height:26px;background:#fff;"></div>
<div class="a" style="left:357px;top:77px;width:195px;height:3px;background:#23569f;"></div>
<div class="a" style="left:356px;top:79px;width:1px;height:24px;background:#d4d4d4;"></div>
<div class="a" style="left:552px;top:79px;width:1px;height:24px;background:#d4d4d4;"></div>
<svg style="left:262.5px;top:84px;" width="10" height="11" viewBox="0 0 10 11">
<path d="M0.6 0.6 H6 L9 3.6 V10.4 H0.6 Z" fill="#f4f7fd" stroke="#b9a878" stroke-width="0.9"/>
<path d="M5.6 0.6 L9 4 H5.6 Z" fill="#f1d89a" stroke="#d3b870" stroke-width="0.6"/>
<path d="M2 3.4 H4.6 M2 5.2 H7.6 M2 7 H7.6 M2 8.8 H7.6" stroke="#8fa4d2" stroke-width="1"/></svg>
<div class="t b" style="left:277.2px;top:82.63px;font-size:12px;line-height:14px;height:14px;transform:scaleX(0.9562);color:#4a4a4a;">Function_1</div>
<svg style="left:362px;top:82.8px;" width="12" height="12" viewBox="0 0 12 12">
<path d="M0 2.4 H4.4 M10 2.4 H11.6" stroke="#2f63b4" stroke-width="1" fill="none" opacity="0.8"/>
<path d="M4.4 0.8 H9.2 L10.6 2.4 L9.2 4 H4.4 Z" fill="#fff" stroke="#2f63b4" stroke-width="1.1" stroke-linejoin="round"/>
<path d="M0.2 5.9 H7" stroke="#2f63b4" stroke-width="1.2" opacity="0.6"/>
<path d="M6.6 5.9 V9.6 H11" stroke="#2f63b4" stroke-width="1.1" fill="none" opacity="0.75"/>
<rect x="0.9" y="7.7" width="3.8" height="3.4" rx="0.4" fill="#fff" stroke="#2f63b4" stroke-width="1.2"/></svg>
<div class="t b" style="left:378.3px;top:82.63px;font-size:12px;line-height:14px;height:14px;transform:scaleX(0.9835);color:#2b56a5;">FunctionOverviewDiagram1</div>
<svg style="left:539.7px;top:85.4px;" width="9" height="9" viewBox="0 0 9 9"><path d="M0.9 0.9 L7.7 7.7 M7.7 0.9 L0.9 7.7" stroke="#111" stroke-width="1.8" fill="none"/></svg>
<svg style="left:978px;top:82px;" width="9" height="4" viewBox="0 0 9 4"><rect x="0.5" y="0.5" width="7.6" height="2.7" rx="0.5" fill="#dcdcdc" stroke="#666" stroke-width="1"/><path d="M1.2 1.3 H7.4" stroke="#fff" stroke-width="0.8"/></svg>
<svg style="left:996.4px;top:82.3px;" width="10" height="9" viewBox="0 0 10 9"><rect x="0.5" y="0.5" width="7.9" height="7.4" rx="0.8" fill="#fdfdfd" stroke="#6a6a6a" stroke-width="1"/><path d="M0.8 2.4 H8.2" stroke="#7a7a7a" stroke-width="0.9"/><path d="M1 1.3 H8" stroke="#d0d0d0" stroke-width="0.9"/></svg>
<svg style="left:0px;top:0px;pointer-events:none;" width="1010" height="677" viewBox="0 0 1010 677"><defs><linearGradient id="g2" x1="0" y1="0" x2="1" y2="1"><stop offset="0" stop-color="#dccbc6"/><stop offset="1" stop-color="#bfaeaa"/></linearGradient></defs><rect x="553.5" y="333.5" width="159.5" height="55" fill="#e0ebff" stroke="#505050" stroke-width="1.1"/><path d="M528.8 340.7 H545.2 L553.2 348.9 L545.2 357.1 H528.8 Z" fill="#fff" stroke="#666" stroke-width="1"/><rect x="532" y="343.9" width="10.6" height="10.4" rx="1.5" fill="url(#g2)"/><path d="M528.8 364.5 H545.2 L553.2 372.7 L545.2 380.9 H528.8 Z" fill="#fff" stroke="#666" stroke-width="1"/><rect x="532" y="367.8" width="10.6" height="10.6" rx="1.5" fill="url(#g2)"/><path d="M713 352.6 H729 L737 360.7 L729 368.8 H713 Z" fill="#fff" stroke="#666" stroke-width="1"/><rect x="716.1" y="355.8" width="10.2" height="10.0" rx="1.5" fill="url(#g2)"/><rect x="547.5" y="328.5" width="15" height="11.8" rx="3" fill="#fff" stroke="#3c3c3c" stroke-width="1.1"/><path d="M550.4 334.6 H559.6 M555 331.2 V338" stroke="#000" stroke-width="2.4"/><rect x="674.3" y="388.8" width="38.7" height="12" fill="#4d8fe0"/></svg>
<div class="t" style="left:556.9px;top:344.22px;font-size:8.4px;line-height:10.4px;height:10.4px;transform:scaleX(0.9846);color:#2e2cf6;">b</div>
<div class="t" style="left:556.9px;top:368.22px;font-size:8.4px;line-height:10.4px;height:10.4px;transform:scaleX(0.9846);color:#2e2cf6;">a</div>
<div class="t" style="left:687.8px;top:356.22px;font-size:8.4px;line-height:10.4px;height:10.4px;transform:scaleX(1.0029);color:#2e2cf6;">result</div>
<div class="t" style="left:612.8px;top:393.42px;font-size:8.4px;line-height:10.4px;height:10.4px;transform:scaleX(0.9432);color:#2e2cf6;">Function_1</div>
<div class="t" style="left:677.6px;top:389.09px;font-size:10px;line-height:12px;height:12px;transform:scaleX(1.0208);color:#fff;">Normal</div>
<!-- status -->
<div class="t" style="left:8.0px;top:640.43px;font-size:12px;line-height:14px;height:14px;transform:scaleX(0.9226);color:#3d3d3d;">EHANDBOOK_NAVIGATOR License</div>
<div class="a" style="left:197.5px;top:641px;width:1px;height:1px;background:#d2d2d2;"></div>
<div class="a" style="left:197.5px;top:644px;width:1px;height:1px;background:#d2d2d2;"></div>
<div class="a" style="left:197.5px;top:647px;width:1px;height:1px;background:#d2d2d2;"></div>
<div class="a" style="left:197.5px;top:650px;width:1px;height:1px;background:#d2d2d2;"></div>
<div class="t" style="left:203.4px;top:640.63px;font-size:12px;line-height:14px;height:14px;transform:scaleX(0.9509);color:#3d3d3d;">Data Source:</div>
<div class="a" style="left:274px;top:638px;width:202px;height:18px;background:#fff;border:1px solid #b8bcc4;box-sizing:border-box;"></div>
<div class="t" style="left:277.6px;top:641.03px;font-size:12px;line-height:14px;height:14px;transform:scaleX(0.9899);color:#3d3d3d;">None</div>
<svg style="left:464.2px;top:645.2px;" width="6" height="4" viewBox="0 0 6 4"><path d="M0 0 H6 L3 3.2 Z" fill="#222"/></svg>
<svg style="left:482.8px;top:641.3px;" width="11" height="11" viewBox="0 0 11 11"><g transform="translate(5.4 5.4)"><rect x="-1.1" y="-5.4" width="2.2" height="10.8" fill="#979797" transform="rotate(0)"/><rect x="-1.1" y="-5.4" width="2.2" height="10.8" fill="#979797" transform="rotate(45)"/><rect x="-1.1" y="-5.4" width="2.2" height="10.8" fill="#979797" transform="rotate(90)"/><rect x="-1.1" y="-5.4" width="2.2" height="10.8" fill="#979797" transform="rotate(135)"/><circle r="3.6" fill="#979797"/><circle r="1.5" fill="#fff"/></g></svg>
<svg style="left:499px;top:641px;" width="14" height="11" viewBox="0 0 14 11">
<path d="M0.6 5.4 L8 0.8 L13.6 4 L6.4 8.6 Z" fill="#8a8a8a" stroke="#6e6e6e" stroke-width="0.6"/>
<path d="M0.6 5.4 L6.4 8.6 V10.4 L0.6 7.2 Z" fill="#5e5e5e"/>
<path d="M6.4 8.6 L13.6 4 V5.8 L6.4 10.4 Z" fill="#b5b5b5"/></svg>
<div class="a" style="left:517px;top:639px;width:1px;height:15px;background:#9c9c9c;"></div>
<svg style="left:524.8px;top:641px;" width="13" height="12" viewBox="0 0 13 12"><path d="M2.6 0.6 H12 V7" fill="none" stroke="#9a9a9a" stroke-width="1"/><path d="M4.6 2.4 V5.8 M7.2 2.4 V5.8 M9.8 2.4 V5.8 M3.6 3.6 H6 M8.6 3.6 H11" stroke="#9a9a9a" stroke-width="0.9"/><rect x="0.6" y="6.6" width="11" height="4.4" fill="#f4f4f4" stroke="#9a9a9a" stroke-width="1"/><path d="M3 7 V11 M5.6 7 V11 M8.2 7 V11" stroke="#9a9a9a" stroke-width="0.9"/></svg>
<svg style="left:543.4px;top:641px;" width="13" height="12" viewBox="0 0 13 12"><path d="M2.6 0.6 H12 V7" fill="none" stroke="#9a9a9a" stroke-width="1"/><path d="M4.6 2.4 V5.8 M7.2 2.4 V5.8 M9.8 2.4 V5.8 M3.6 3.6 H6 M8.6 3.6 H11" stroke="#9a9a9a" stroke-width="0.9"/><rect x="0.6" y="6.6" width="11" height="4.4" fill="#f4f4f4" stroke="#9a9a9a" stroke-width="1"/><circle cx="8.8" cy="8.8" r="2.6" fill="#f4f4f4" stroke="#9a9a9a" stroke-width="1"/><path d="M7.2 7.2 l3.2 3.2 M10.4 7.2 l-3.2 3.2" stroke="#9a9a9a" stroke-width="0.8"/></svg>
<svg style="left:562px;top:641px;" width="13" height="12" viewBox="0 0 13 12"><path d="M3.6 0.6 H12 V8 H9" fill="#f4f4f4" stroke="#9a9a9a" stroke-width="1"/><path d="M6 2.2 H10.4 M9.6 2.2 V5.6" stroke="#9a9a9a" stroke-width="0.9"/><rect x="0.6" y="4.4" width="8" height="6.6" fill="#f4f4f4" stroke="#9a9a9a" stroke-width="1"/><path d="M0.6 6 H8.6" stroke="#9a9a9a" stroke-width="1.2"/><path d="M2 9.4 h2.4" stroke="#9a9a9a" stroke-width="0.9"/></svg>
<svg style="left:581px;top:642px;" width="10" height="10" viewBox="0 0 10 10"><path d="M0.4 0.2 L9.8 4.8 L0.4 9.6 Z" fill="#a9a9a9"/></svg>
<svg style="left:600.4px;top:642.4px;" width="10" height="10" viewBox="0 0 10 10"><rect x="0.3" y="0.3" width="8.6" height="8.6" rx="0.8" fill="#a6a6a6"/><rect x="0.3" y="0.3" width="8.6" height="1.4" fill="#c2c2c2"/></svg>
<div class="a" style="left:615.8px;top:641px;width:1px;height:1px;background:#d2d2d2;"></div>
<div class="a" style="left:615.8px;top:644px;width:1px;height:1px;background:#d2d2d2;"></div>
<div class="a" style="left:615.8px;top:647px;width:1px;height:1px;background:#d2d2d2;"></div>
<div class="a" style="left:615.8px;top:650px;width:1px;height:1px;background:#d2d2d2;"></div>
<div class="a" style="left:3px;top:660.5px;width:1px;height:1px;background:#d2d2d2;"></div>
<div class="a" style="left:3px;top:663.9px;width:1px;height:1px;background:#d2d2d2;"></div>
<div class="a" style="left:3px;top:667.3px;width:1px;height:1px;background:#d2d2d2;"></div>
<div class="a" style="left:3px;top:670.7px;width:1px;height:1px;background:#d2d2d2;"></div>
<svg style="left:8px;top:660px;" width="13" height="12" viewBox="0 0 13 12">
<rect x="0.5" y="0.5" width="11" height="11" fill="#eaf7fa" stroke="#8f7f55" stroke-width="1"/>
<path d="M2.8 3.4 H9.2 M2.8 5.4 H9.2 M2.8 7.4 H6.8" stroke="#a9c0e6" stroke-width="1.1"/></svg>
<div class="a" style="left:23px;top:657px;width:19px;height:17px;background:#cce4f7;border:1px solid #99ccf3;box-sizing:border-box;"></div>
<svg style="left:27px;top:660px;" width="13" height="12" viewBox="0 0 13 12">
<rect x="0.5" y="0.5" width="12" height="11" fill="#eaf7fa" stroke="#8f7f55" stroke-width="1"/>
<rect x="1.2" y="1.2" width="3.4" height="9.6" fill="#8fa9dc"/>
<path d="M5.3 0.5 V11.5" stroke="#8f7f55" stroke-width="1"/>
<path d="M7.4 3.4 H10.4 M7.4 5.4 H10.4 M7.4 7.4 H9" stroke="#a9c0e6" stroke-width="1.1"/></svg>
<svg style="left:45px;top:660px;" width="13" height="12" viewBox="0 0 13 12">
<rect x="0.5" y="0.5" width="11" height="11" fill="#eaf7fa" stroke="#8f7f55" stroke-width="1"/>
<circle cx="7.8" cy="5.6" r="1.6" fill="#8aa5da"/><path d="M5.2 11 Q5.2 7.6 7.8 7.6 Q10.4 7.6 10.4 11 Z" fill="#8aa5da"/></svg>
<div class="a" style="left:63px;top:657px;width:1px;height:17px;background:#b5b5b5;"></div>
<div class="a" style="left:68px;top:665px;width:10px;height:2px;background:#2a35b5;"></div>
<div class="a" style="left:86.6px;top:665px;width:10px;height:2px;background:#2a35b5;"></div>
<div class="a" style="left:90.6px;top:661px;width:2px;height:10px;background:#2a35b5;"></div>
<div class="t b" style="left:104.6px;top:659.12px;font-size:6.6px;line-height:8.6px;height:8.6px;transform:scaleX(0.8718);color:#8e8e8e;">100</div>
<div class="t b" style="left:106.4px;top:664.45px;font-size:7.4px;line-height:9.4px;height:9.4px;transform:scaleX(0.9727);color:#8e8e8e;">%</div>
<svg style="left:123.4px;top:661px;" width="11" height="11" viewBox="0 0 11 11">
<path d="M0 0 H4.4 L0 4.4 Z M10.8 0 V4.4 L6.4 0 Z M0 10.4 V6 L4.4 10.4 Z M10.8 10.4 H6.4 L10.8 6 Z" fill="#2746c8"/>
<path d="M1.4 1.4 L9.4 9 M9.4 1.4 L1.4 9" stroke="#2746c8" stroke-width="1.8"/>
<rect x="4.1" y="3.9" width="2.6" height="2.6" fill="#fff"/></svg>
</body></html>
